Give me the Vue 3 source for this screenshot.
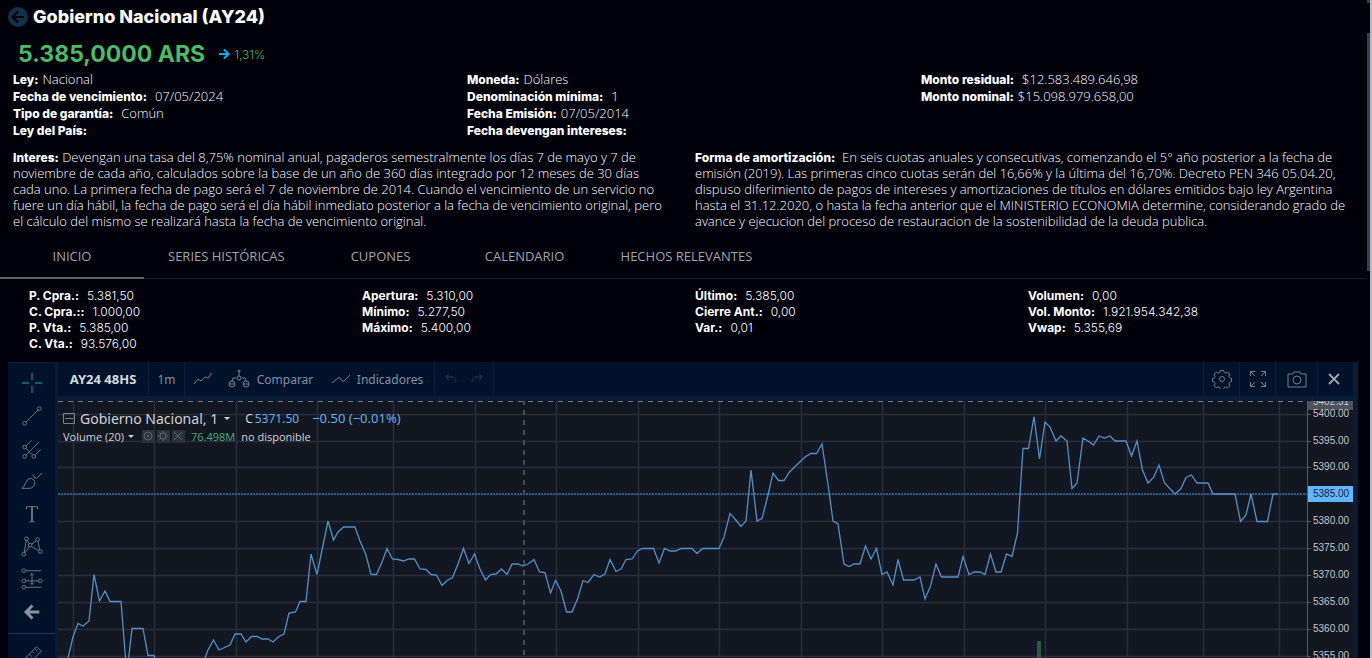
<script setup>
const general = [
  [
    ['Ley:', 'Nacional'],
    ['Fecha de vencimiento:', '07/05/2024', true],
    ['Tipo de garantía:', 'Común', true],
    ['Ley del País:', ''],
  ],
  [
    ['Moneda:', 'Dólares'],
    ['Denominación mínima:', '1', true],
    ['Fecha Emisión:', '07/05/2014'],
    ['Fecha devengan intereses:', ''],
  ],
  [
    ['Monto residual:', '$12.583.489.646,98', true],
    ['Monto nominal:', '$15.098.979.658,00'],
  ],
]

const tabs = ['INICIO', 'SERIES HISTÓRICAS', 'CUPONES', 'CALENDARIO', 'HECHOS RELEVANTES']

const quotes = [
  [['P. Cpra.:', '5.381,50'], ['C. Cpra.::', '1.000,00'], ['P. Vta.:', '5.385,00'], ['C. Vta.:', '93.576,00']],
  [['Apertura:', '5.310,00'], ['Mínimo:', '5.277,50'], ['Máximo:', '5.400,00']],
  [['Último:', '5.385,00'], ['Cierre Ant.:', '0,00'], ['Var.:', '0,01']],
  [['Volumen:', '0,00'], ['Vol. Monto:', '1.921.954.342,38'], ['Vwap:', '5.355,69']],
]

const top = 401
const span = 257
const gridX = [73, 154, 236, 317, 393, 475, 556, 638, 719, 801, 882, 964, 1045, 1127, 1203, 1279]
const prices = [
  ['5400.00', 414], ['5395.00', 441], ['5390.00', 467], ['5380.00', 521], ['5375.00', 548],
  ['5370.00', 575], ['5365.00', 602], ['5360.00', 629], ['5355.00', 656],
]
const gridY = [...prices.map((p) => p[1]), 494]
const place = (y) => ({ top: ((y - top) / span) * 100 + '%' })

const line =
  '68,658 73,637 78,623.5 83,626 89,621 94,574.5 99.5,601 105,591 110,601.5 121,601.5 126,664 128,664 132,628.5 143,628.5 148,655.5 154,655.5 156,664 203,664 208,650 213.5,640 219,650 230,645 235,634 241,634 246,642 251.5,636.5 257,636.5 262,639 268,639 273,642 279,636.5 284,634 289,613 295.5,612 300,601.5 306,601.5 311,554 317,574.5 328,521 333.5,540 338,532 343.5,527 355,527 360,541 366,555 371,574.5 376.5,574.5 382,562 387,548.5 392.5,559 398,559.5 403.5,561 409,559 414.5,559 420,569 426,569.5 431,574.5 436.5,575 442,585.5 447,580.5 452.5,577.5 458,564 463.5,548.5 469,563.5 474.5,554 480,569 485.5,580 490.5,574.5 496,574 501.5,569 507,574.5 512,564 518,564 523,566 528,564 534,559.5 539.5,572 545,572.5 550.5,593 555.5,580.5 561,591 566.5,612 572,612 577.5,599 583,580.5 588,582.5 594,574.5 599.5,577 605,574 610,559.5 616,571.5 621,569 626,559.5 632,559 637.5,551 642.5,548.5 653.5,548.5 659,563 664.5,548.5 670,551 675.5,551 681,548.5 692,548.5 697,553.5 702.5,548.5 719,548.5 724,537 730,513.5 735,519 741,526.5 746,521 751,470 757,521 762,518.5 768,495 773,473 778.5,480.5 784,480.5 789.5,472 805,457 811,453.5 816.5,453.5 822,444 828.5,488 833,521 838,524 844,564 849,566.5 854,564 860,564 865.5,546 871,559 876.5,548.5 882,574.5 887,572 893,585 898,559.5 903.5,580 914,580 920,577 925,599 930.5,586 936,564 941.5,577 958,577 963,556.5 969,574.5 974,572 980,572 985,574.5 990.5,554 996,572 1001,572 1006.5,554 1012,556.5 1017.5,533 1023,448.5 1028.5,448.5 1034,416.5 1039.5,459 1045,422 1050,427 1056,441 1061,436 1067,441 1072,488.5 1077,483 1083,438 1088,441 1093.5,445 1099,436 1104.5,438 1110,436 1115,441 1126,441 1131.5,456 1137,441 1142.5,470 1148,483 1153.5,477.5 1159,465 1164.5,483 1175,494 1181,488.5 1186,477.5 1191.5,475 1197,483 1208,483 1213,494 1235,494 1240.5,521.5 1246,515 1251,494 1257,521.5 1267.5,521.5 1273,494 1278,494'
</script>

<template>
  <div class="page">
    <main class="sheet">
      <header class="title">
        <button class="back" aria-label="Volver">
          <svg width="20" height="20" viewBox="0 0 20 20"><circle cx="10" cy="10" r="10" fill="#123247" /><path d="M16 10H5M10 4.500L4.500 10l5.500 5.500" fill="none" stroke="#00000b" stroke-width="2.200" /></svg>
        </button>
        <h1>Gobierno Nacional (AY24)</h1>
      </header>
      <div class="price">
        <strong>5.385,0000 ARS</strong>
        <svg width="11" height="12" viewBox="0 0 11 12"><path d="M0 6H9M5 1.500L9.500 6 5 10.500" fill="none" stroke="#00aeea" stroke-width="2.200" /></svg>
        <span>1,31%</span>
      </div>
      <section class="general">
        <dl v-for="(col, i) in general" :key="i">
          <div v-for="row in col" :key="row[0]" :class="{ wide: row[2] }"><dt>{{ row[0] }}</dt><dd>{{ row[1] }}</dd></div>
        </dl>
      </section>
      <section class="terms">
        <p><b>Interes:</b> Devengan una tasa del 8,75% nominal anual, pagaderos semestralmente los días 7 de mayo y 7 de<br>noviembre de cada año, calculados sobre la base de un año de 360 días integrado por 12 meses de 30 días<br>cada uno. La primera fecha de pago será el 7 de noviembre de 2014. Cuando el vencimiento de un servicio no<br>fuere un día hábil, la fecha de pago será el día hábil inmediato posterior a la fecha de vencimiento original, pero<br>el cálculo del mismo se realizará hasta la fecha de vencimiento original.</p>
        <p><b>Forma de amortización:</b>&nbsp; En seis cuotas anuales y consecutivas, comenzando el 5° año posterior a la fecha de<br>emisión (2019). Las primeras cinco cuotas serán del 16,66% y la última del 16,70%. Decreto PEN 346 05.04.20,<br>dispuso diferimiento de pagos de intereses y amortizaciones de títulos en dólares emitidos bajo ley Argentina<br>hasta el 31.12.2020, o hasta la fecha anterior que el MINISTERIO ECONOMIA determine, considerando grado de<br>avance y ejecucion del proceso de restauracion de la sostenibilidad de la deuda publica.</p>
      </section>
      <nav class="tabs">
        <button v-for="(t, i) in tabs" :key="t" :class="{ active: i === 0 }">{{ t }}</button>
      </nav>
      <section class="quotes">
        <dl v-for="(col, i) in quotes" :key="i">
          <div v-for="row in col" :key="row[0]" class="wide"><dt>{{ row[0] }}</dt><dd>{{ row[1] }}</dd></div>
        </dl>
      </section>

      <section class="widget">
        <aside class="tools">
          <div class="set">
            <button aria-label="Cruz"><svg class="cross" viewBox="0 0 24 24"><path d="M12 1v8M12 15v8M1 12h8M15 12h8" stroke-width="1.500" /></svg></button>
            <button aria-label="Línea"><svg viewBox="0 0 24 24"><circle cx="4" cy="20" r="2" /><circle cx="20" cy="4" r="2" /><path d="M5.500 18.500l13-13" /></svg></button>
            <button aria-label="Tridente"><svg viewBox="0 0 24 24"><circle cx="4" cy="10" r="2" /><circle cx="4" cy="20" r="2" /><circle cx="14" cy="20" r="2" /><path d="M5.500 8.500l6-6M5.500 18.500l14-14M15.500 18.500l6-6M5.500 11.500l7 7" /></svg></button>
            <button aria-label="Pincel"><svg viewBox="0 0 24 24"><path d="M1 20q3-2 4-6 2-5 6-5 4 1 4 5-1 6-6 6zM13 5q1 4 4 4l6-6M16 9l-1-1" /></svg></button>
            <button aria-label="Texto"><svg viewBox="0 0 24 24"><path d="M6 7V4h12v3M11.500 4v16M12.500 4v16M9 20.500h6" /></svg></button>
            <button aria-label="Patrones"><svg viewBox="0 0 24 24"><circle cx="6" cy="4" r="2" /><circle cx="18" cy="5" r="2" /><circle cx="10" cy="11" r="2" /><circle cx="3" cy="21" r="2" /><circle cx="21" cy="18" r="2" /><path d="M5.700 6l-2.200 13M18.500 7l2 9M7 5.500l2 4M16.500 6.500l-5 3.500M9 13l-5 6.500M11.500 12.500l8 4.500" /></svg></button>
            <button aria-label="Medición"><svg viewBox="0 0 24 24"><circle cx="3" cy="3" r="2" /><circle cx="21" cy="14" r="2" /><circle cx="3" cy="14" r="2" /><circle cx="3" cy="21" r="2" /><path d="M5 3h17M5 14h14M5 21h17M12 6v12M10 8l2-2 2 2M10 16l2 2 2-2" /></svg></button>
            <button aria-label="Flecha"><svg viewBox="0 0 24 24"><path d="M20 12H6M12.500 5L5.500 12l7 7" stroke-width="3.200" stroke="#8a949f" /></svg></button>
          </div>
          <hr>
          <button class="ruler" aria-label="Regla"><svg viewBox="0 0 24 24"><path d="M1 19L17 3l5 5L6 24zM6 14l2 2M9 11l3 3M12 8l2 2M15 5l3 3" /></svg></button>
        </aside>
        <div class="board">
          <div class="toolbar">
            <button class="symbol">AY24 48HS</button>
            <button class="interval">1m</button>
            <button class="style" aria-label="Estilo"><svg width="20" height="14" viewBox="0 0 20 14"><path d="M1 12l4-5 3 2 4-4 3 1 4-5" /></svg></button>
            <button class="compare"><svg width="22" height="20" viewBox="0 0 22 20"><path d="M11 3v4M8 9H5l-1 3M14 9h3l1 3M1 15h6M15 15h6" /><circle cx="11" cy="9" r="2" /><circle cx="11" cy="2" r="1" /><circle cx="4" cy="15" r="3" /><circle cx="18" cy="15" r="3" /></svg>Comparar</button>
            <button class="indicators"><svg width="20" height="12" viewBox="0 0 20 12"><path d="M1 10l6-5q1-1 2 0l2 3q1 1 2 0l6-6" /></svg>Indicadores</button>
            <div class="history">
              <button aria-label="Deshacer"><svg width="12" height="12" viewBox="0 0 12 12"><path d="M4 1L1 4l3 3M1 4h6q4 0 4 5" /></svg></button>
              <button aria-label="Rehacer"><svg width="12" height="12" viewBox="0 0 12 12"><path d="M8 1l3 3-3 3M11 4H5q-4 0-4 5" /></svg></button>
            </div>
            <div class="actions">
              <button aria-label="Configuración"><svg width="20" height="20" viewBox="0 0 20 20"><circle cx="10" cy="10" r="2.500" /><path d="M8.500 1.500h3l.7 2 1.600.6 2-1 2.100 2.100-1 2 .6 1.600 2 .7v3l-2 .7-.6 1.600 1 2-2.100 2.100-2-1-1.600.6-.7 2h-3l-.7-2-1.600-.6-2 1-2.100-2.100 1-2-.6-1.600-2-.7v-3l2-.7.6-1.600-1-2 2.100-2.100 2 1 1.600-.6z" /></svg></button>
              <button aria-label="Pantalla completa"><svg width="18" height="18" viewBox="0 0 18 18"><path d="M1.500 6V1.500H6M1.500 1.500L6 6M12 1.500h4.500V6M16.500 1.500L12 6M1.500 12v4.500H6M1.500 16.500L6 12M12 16.500h4.500V12M16.500 16.500L12 12" /></svg></button>
              <button class="camera" aria-label="Captura"><svg width="20" height="17" viewBox="0 0 20 17"><path d="M1 3h5l1-2h6l1 2h5v13H1z" /><circle cx="10" cy="9" r="4" /></svg></button>
              <button class="quit" aria-label="Cerrar"><svg width="12" height="12" viewBox="0 0 12 12"><path d="M1 1l10 10M11 1L1 11" stroke="#9aa3ad" stroke-width="2" /></svg></button>
            </div>
          </div>
          <div class="chart">
            <div class="plot">
              <svg class="canvas" viewBox="58 401 1249 257" preserveAspectRatio="none">
                <g stroke="#2a2e3d" stroke-width="1.500">
                  <path v-for="x in gridX" :key="'x' + x" :d="`M${x + 0.5} 401V658`" />
                  <path v-for="y in gridY" :key="'y' + y" :d="`M58 ${y + 0.5}H1308`" />
                </g>
                <rect x="1037" y="641" width="4" height="17" fill="#2a5848" />
                <path d="M58 494H1308" stroke="#2f5a85" stroke-width="2" stroke-dasharray="2 1" />
                <path d="M58 401.500H1308" stroke="#777b84" stroke-dasharray="5 5" />
                <path d="M524 400V658" stroke="#454c58" stroke-dasharray="5 5" stroke-width="2" />
                <polyline :points="line" fill="none" stroke="#5290c9" stroke-width="1.300" />
              </svg>
              <div class="legend">
                <div class="main-series">
                  <svg width="12" height="11" viewBox="0 0 12 11"><path d="M.5.5h11v10H.5zM2 5.500h8" fill="none" stroke="#7c828d" /></svg>
                  <span class="name">Gobierno Nacional, 1</span><i></i>
                  <span class="close">C</span><span class="blue">5371.50</span><span class="blue change">−0.50 (−0.01%)</span>
                </div>
                <div class="volume">
                  <span>Volume (20)</span><i></i>
                  <span class="minis">
                    <button aria-label="Ocultar"><svg viewBox="0 0 12 12"><circle cx="6" cy="6" r="4" /><circle cx="6" cy="6" r="1" /></svg></button>
                    <button aria-label="Formato"><svg viewBox="0 0 12 12"><circle cx="6" cy="6" r="3" /><path d="M6 1v2M6 9v2M1 6h2M9 6h2M2.500 2.500l1.500 1.500M8 8l1.500 1.500M9.500 2.500L8 4M4 8L2.500 9.500" /></svg></button>
                    <button aria-label="Eliminar"><svg viewBox="0 0 12 12"><path d="M2 2l8 8M10 2l-8 8" /></svg></button>
                  </span>
                  <span class="green">76.498M</span><span>no disponible</span>
                </div>
              </div>
            </div>
            <div class="axis">
              <span class="tag cursor" :style="place(402)">5402.31</span>
              <span v-for="p in prices" :key="p[0]" class="tick" :style="place(p[1])">{{ p[0] }}</span>
              <span class="tag last" :style="place(494)">5385.00</span>
            </div>
          </div>
        </div>
      </section>
    </main>
    <div class="scroll"><span class="before"></span><span class="thumb"></span></div>
  </div>
</template>

<style>
html, body { margin: 0; background: #00000b; }
</style>

<style scoped>
.page { height: 100vh; display: flex; overflow: hidden; background: #00000b; color: #fff; font-family: "Inter", "Liberation Sans", sans-serif; font-size: 12px; }
.sheet { flex: 1; min-width: 0; display: flex; flex-direction: column; }
button { margin: 0; padding: 0; border: 0; background: none; color: inherit; font: inherit; display: flex; align-items: center; justify-content: center; }
dl, dd, dt, p, h1 { margin: 0; }
.title { display: flex; align-items: center; gap: 5px; height: 34px; padding-left: 8px; }
h1 { font-size: 18px; line-height: 24px; font-weight: 800; }
.price { display: flex; align-items: center; height: 34px; padding: 3px 0 0 18px; color: #4dba64; }
.price strong { font-size: 23px; line-height: 30px; margin-right: 14px; }
.price span { margin-left: 4px; font-size: 12px; font-weight: 300; }
.general { display: grid; grid-template-columns: repeat(3, 1fr); padding-right: 5px; min-height: 69px; }
.general dl { padding-left: 13px; }
dl > div { display: flex; gap: 4px; line-height: 16px; }
dl > .wide { gap: 8px; }
.general dl > div { line-height: 17px; height: 17px; }
dt, b { font-weight: 700; }
.general dt { font-weight: 800; }
dd { font-weight: 300; }
.general dd { font-family: "Open Sans", sans-serif; font-size: 13px; font-weight: 340; }
.terms { display: grid; grid-template-columns: repeat(2, minmax(0, 1fr)); padding: 9px 3px 0 0; line-height: 16px; white-space: nowrap; font-family: "Open Sans", sans-serif; font-size: 13px; font-weight: 340; }
.terms p { padding-left: 13px; }
.terms b { font-family: "Inter", sans-serif; font-size: 12px; line-height: 12px; font-weight: 800; }
.tabs { display: flex; height: 49px; border-bottom: 1px solid #082237; color: #a4a4a9; font-family: "Open Sans", sans-serif; font-size: 13px; }
.tabs button { box-sizing: border-box; min-width: 144px; height: 50px; padding: 6px 24px 0; border-bottom: 2px solid transparent; }
.tabs .active { border-color: #5f6068; }
.quotes { display: grid; grid-template-columns: repeat(4, 1fr); padding: 9px 6px 10px 29px; }
.widget { flex: 1; min-height: 0; display: flex; margin: 0 9px 0 8px; background: #091c35; border-right: 5px solid #091c35; overflow: hidden; }
.tools { width: 47px; margin-right: 3px; background: #001229; padding-top: 4px; box-sizing: border-box; border-top: 1px solid #0b2038; }
.set { display: flex; flex-direction: column; height: 261px; }
.set button { flex: 1; }
.ruler { width: 100%; height: 33px; }
.tools svg { width: 22px; height: 22px; fill: none; stroke: #71808f; stroke-width: 1; }
.tools .cross { stroke: #176f93; }
.tools hr { margin: 5px 0 4px; border: 0; border-top: 1px solid #24364b; }
.board { flex: 1; min-width: 0; display: flex; flex-direction: column; }
.toolbar { height: 34px; flex: none; display: flex; background: #001229; color: #8490a0; font-family: "Noto Sans", sans-serif; margin-bottom: 5px; }
.toolbar svg { fill: none; stroke: #71808f; stroke-width: 1; }
.symbol { width: 91px; font-size: 13px; font-weight: 700; color: #d5d9de; border-right: 1px solid #0b2038; }
.interval { width: 36px; border-right: 1px solid #0b2038; }
.style { width: 36px; }
.compare { width: 99px; gap: 7px; }
.indicators { width: 114px; gap: 6px; }
.history { display: flex; gap: 14px; padding: 0 10px; border: solid #0b2038; border-width: 0 1px; }
.history svg { opacity: .35; }
.actions { display: flex; margin-left: auto; }
.actions button { width: 36px; border-left: 1px solid #0b2038; box-sizing: border-box; }
.actions .camera { width: 42px; }
.actions .quit { padding-right: 4px; }
.chart { flex: 1; min-height: 0; display: flex; background: #131722; font-family: "Noto Sans", sans-serif; }
.plot { position: relative; flex: 1; min-width: 0; }
.canvas { position: absolute; width: 100%; height: 100%; }
.legend { position: absolute; left: 5px; top: 8px; color: #d0d2d6; white-space: nowrap; }
.legend > div { display: flex; align-items: center; height: 18px; }
i { border: 3px solid transparent; border-top-color: #d0d2d6; border-bottom: 0; margin: 0 0 0 6px; }
.name { font-size: 14px; margin-left: 5px; }
.close { margin-left: 15px; }
.blue { color: #64aef0; margin-left: 2px; font-size: 12px; }
.change { margin-left: 13px; font-size: 13px; }
.volume { font-size: 11px; font-family: "Open Sans", sans-serif; }
.volume i { margin-left: 4px; }
.minis { display: flex; gap: 2px; margin: 0 6px 0 8px; }
.minis button { flex: none; width: 13px; height: 13px; background: #2a303c; }
.minis svg { width: 12px; height: 12px; fill: none; stroke: #5c636e; }
.green { color: #4cae7c; margin-right: 6px; }
.axis { position: relative; width: 45px; flex: none; border-left: 1px solid #55585f; overflow: hidden; font-size: 10px; font-family: "Liberation Sans", sans-serif; color: #c4c6ca; }
.axis span { position: absolute; left: 0; right: 0; height: 16px; line-height: 16px; margin-top: -8px; padding-left: 5px; }
.tick::before { content: ""; position: absolute; left: 0; top: 8px; width: 3px; height: 1px; background: #55585f; }
.cursor { background: #4c525e; }
.last { background: #64b5ff; color: #10233a; }
.scroll { width: 5px; background: linear-gradient(90deg, transparent 0 3px, #b9bbc0 3px); }
.scroll span { display: block; width: 3px; background: #344156; }
.before { height: 3px; margin-bottom: 30px; }
.thumb { height: 238px; }
</style>
